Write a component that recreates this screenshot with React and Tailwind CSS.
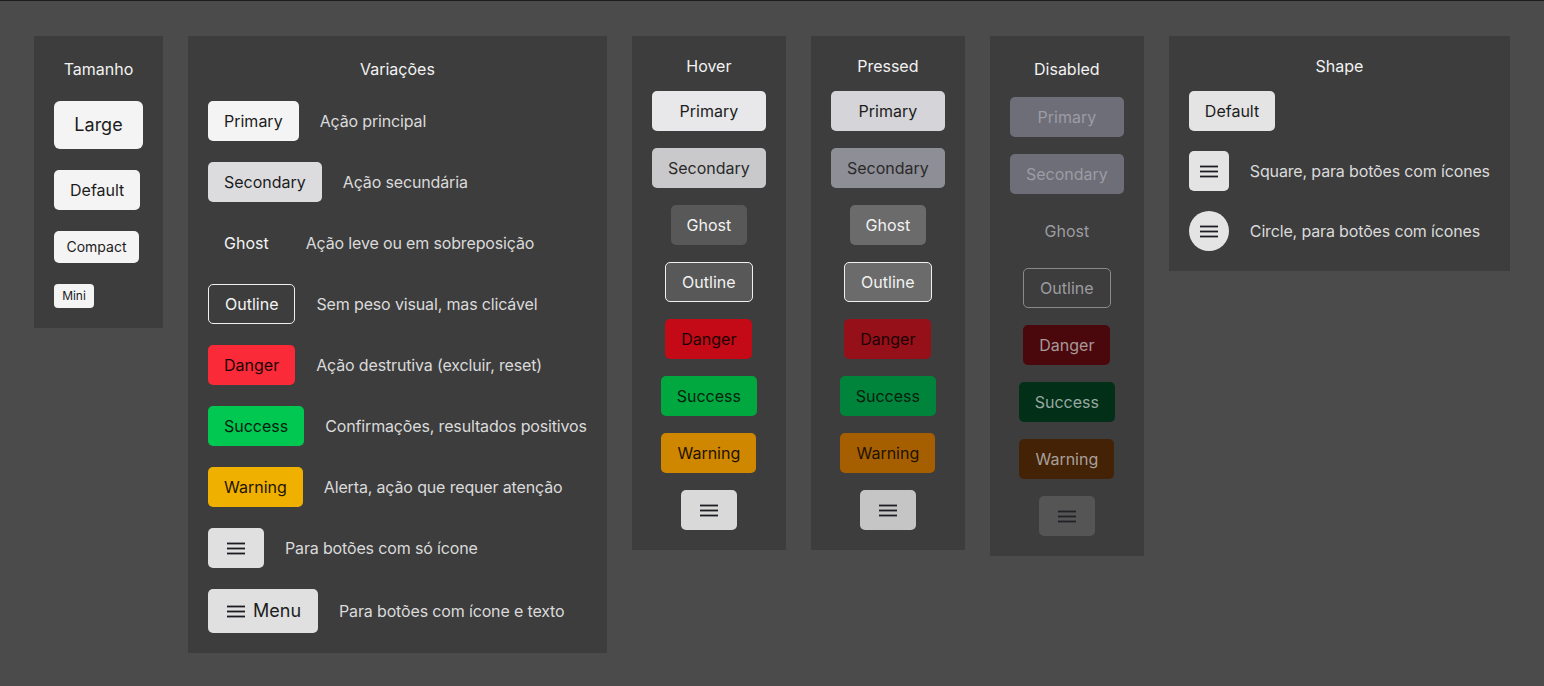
const MenuIcon = () => (
  <svg
    width="18"
    height="13"
    viewBox="0 0 18 13"
    className="shrink-0"
    fill="none"
    stroke="currentColor"
    strokeWidth="1.8"
  >
    <line x1="0" y1="1.5" x2="18" y2="1.5" />
    <line x1="0" y1="6.5" x2="18" y2="6.5" />
    <line x1="0" y1="11.5" x2="18" y2="11.5" />
  </svg>
);

const DEFAULT_SIZE = "h-10 px-4 text-[16px] rounded-[5px]";

const Btn = ({ size = DEFAULT_SIZE, className = "", children }) => (
  <div
    className={
      "flex items-center justify-center leading-none whitespace-nowrap " +
      size +
      " " +
      className
    }
  >
    {children}
  </div>
);

const ICON_SIZE = "h-10 w-14 rounded-[5px]";

const Panel = ({ title, titleCls, children, className = "" }) => (
  <div className={"bg-[#3d3d3d] p-5 flex flex-col " + className}>
    <div className={"text-center text-[16px] text-[#f2f2f2] " + titleCls}>
      {title}
    </div>
    {children}
  </div>
);

const Desc = ({ children }) => (
  <span className="text-[16px] tracking-[-0.15px] text-[#dadada] whitespace-nowrap">
    {children}
  </span>
);

const variations = [
  ["Primary", "bg-[#f4f4f4] text-[#1c1c1c]", "Ação principal"],
  ["Secondary", "bg-[#dcdcdf] text-[#1c1c1c]", "Ação secundária"],
  ["Ghost", "text-[#f4f4f4]", "Ação leve ou em sobreposição"],
  ["Outline", "border border-[#f0f0f0] text-[#f4f4f4]", "Sem peso visual, mas clicável"],
  ["Danger", "bg-[#fb2a38] text-[#1a0606]", "Ação destrutiva (excluir, reset)"],
  ["Success", "bg-[#00c851] text-[#06200f]", "Confirmações, resultados positivos"],
  ["Warning", "bg-[#f0b000] text-[#1d1500]", "Alerta, ação que requer atenção"],
];

const states = {
  Hover: {
    title: "leading-5 mb-[15px]",
    Primary: "bg-[#e8e8ea] text-[#1c1c1c]",
    Secondary: "bg-[#c9c9cc] text-[#2a2a2a]",
    Ghost: "bg-[#585858] text-[#f2f2f2]",
    Outline: "bg-[#585858] border border-[#f0f0f0] text-[#f2f2f2]",
    Danger: "bg-[#c40a16] text-[#1a0204]",
    Success: "bg-[#00a83f] text-[#04200d]",
    Warning: "bg-[#cf8700] text-[#1d1200]",
    icon: "bg-[#d9d9d9] text-[#1c1c22]",
  },
  Pressed: {
    title: "leading-5 mb-[15px]",
    Primary: "bg-[#d5d5d9] text-[#1c1c1c]",
    Secondary: "bg-[#8e8e96] text-[#2a2a2a]",
    Ghost: "bg-[#6b6b6b] text-[#f2f2f2]",
    Outline: "bg-[#6b6b6b] border border-[#f0f0f0] text-[#f2f2f2]",
    Danger: "bg-[#961019] text-[#1a0204]",
    Success: "bg-[#00833a] text-[#04200d]",
    Warning: "bg-[#a65f00] text-[#1d1200]",
    icon: "bg-[#c5c5c5] text-[#1c1c22]",
  },
  Disabled: {
    title: "leading-[26px] mb-[15px]",
    Primary: "bg-[#6e6e78] text-[#9c9ca4]",
    Secondary: "bg-[#6e6e78] text-[#9c9ca4]",
    Ghost: "text-[#9c9ca0]",
    Outline: "border border-[#8a8a8e] text-[#9c9ca0]",
    Danger: "bg-[#4a080c] text-[#a8989a]",
    Success: "bg-[#012f18] text-[#98a8a0]",
    Warning: "bg-[#442206] text-[#a8a09a]",
    icon: "bg-[#555555] text-[#222226]",
  },
};

const StatePanel = ({ name }) => {
  const s = states[name];
  return (
    <Panel title={name} titleCls={s.title} className="w-[154px]">
      <div className="flex flex-col items-center gap-[17px]">
        <Btn className={"self-stretch " + s.Primary}>Primary</Btn>
        <Btn className={"self-stretch " + s.Secondary}>Secondary</Btn>
        <Btn className={s.Ghost}>Ghost</Btn>
        <Btn className={s.Outline}>Outline</Btn>
        <Btn className={s.Danger}>Danger</Btn>
        <Btn className={s.Success}>Success</Btn>
        <Btn className={s.Warning}>Warning</Btn>
        <Btn size={ICON_SIZE} className={s.icon}>
          <MenuIcon />
        </Btn>
      </div>
    </Panel>
  );
};

export default function App() {
  return (
    <div
      className="h-[686px] w-full overflow-hidden bg-[#4b4b4b] border-t border-[#1e1e1e] pt-[35px] pl-[34px] flex items-start gap-[25px]"
      style={{ fontFamily: "Inter, 'Noto Sans', sans-serif" }}
    >
      <Panel title="Tamanho" titleCls="leading-[26px] mb-[19px]">
        <div className="flex flex-col items-start gap-[21px] text-[#1c1c1c]">
          <Btn size="h-12 w-[89px] text-[18px] rounded-[6px]" className="bg-[#f4f4f4]">
            Large
          </Btn>
          <Btn className="bg-[#f4f4f4]">Default</Btn>
          <Btn size="h-8 w-[85px] text-[14px] rounded-[5px]" className="bg-[#f4f4f4]">
            Compact
          </Btn>
          <Btn size="h-6 w-10 text-[12px] rounded-[4px]" className="bg-[#f4f4f4]">
            Mini
          </Btn>
        </div>
      </Panel>

      <Panel title="Variações" titleCls="leading-[26px] mb-[19px]">
        <div className="flex flex-col gap-[21px]">
          {variations.map(([label, cls, desc]) => (
            <div key={label} className="flex items-center gap-[21px]">
              <Btn className={cls}>{label}</Btn>
              <Desc>{desc}</Desc>
            </div>
          ))}
          <div className="flex items-center gap-[21px]">
            <Btn size={ICON_SIZE} className="bg-[#e0e0e0] text-[#1c1c22]">
              <MenuIcon />
            </Btn>
            <Desc>Para botões com só ícone</Desc>
          </div>
          <div className="flex items-center gap-[21px]">
            <Btn
              size="h-11 pl-[19px] pr-[17px] gap-2 text-[18px] rounded-[5px]"
              className="bg-[#e0e0e0] text-[#1c1c22]"
            >
              <MenuIcon />
              <span>Menu</span>
            </Btn>
            <Desc>Para botões com ícone e texto</Desc>
          </div>
        </div>
      </Panel>

      <StatePanel name="Hover" />
      <StatePanel name="Pressed" />
      <StatePanel name="Disabled" />

      <Panel title="Shape" titleCls="leading-5 mb-[15px]">
        <div className="flex flex-col items-start gap-5">
          <Btn className="bg-[#e4e4e4] text-[#1c1c1c]">Default</Btn>
          <div className="flex items-center gap-[21px]">
            <Btn size="h-10 w-10 rounded-[5px]" className="bg-[#e4e4e4] text-[#1c1c22]">
              <MenuIcon />
            </Btn>
            <Desc>Square, para botões com ícones</Desc>
          </div>
          <div className="flex items-center gap-[21px]">
            <Btn size="h-10 w-10 rounded-full" className="bg-[#e4e4e4] text-[#1c1c22]">
              <MenuIcon />
            </Btn>
            <Desc>Circle, para botões com ícones</Desc>
          </div>
        </div>
      </Panel>
    </div>
  );
}
